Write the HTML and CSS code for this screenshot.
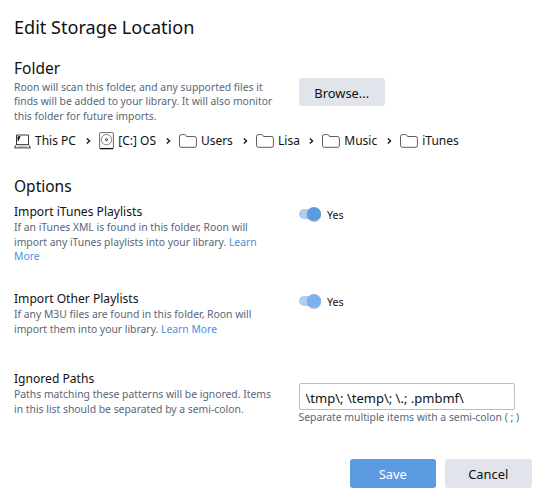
FILE: index.html
```html
<!DOCTYPE html>
<html lang="en">
<head>
<meta charset="UTF-8">
<meta name="viewport" content="width=device-width, initial-scale=1.0">
<title>Edit Storage Location</title>
<link rel="stylesheet" href="styles.css">
</head>
<body>
<div class="dialog">
    <h1>Edit Storage Location</h1>
    <div class="row folder">
        <div class="info">
            <h2>Folder</h2>
            <p>Roon will scan this folder, and any supported files it<br>finds will be added to your library. It will also monitor<br>this folder for future imports.</p>
        </div>
        <button class="btn browse">Browse...</button>
    </div>
    <svg width="0" height="0" class="defs">
        <symbol id="folder" viewBox="0 0 18 14">
            <path d="M.5 11.5V2.5Q.5 .6 2.4 .6H5.6Q6.6 .6 7.2 1.8L7.6 2.5H15.6Q17.4 2.5 17.4 4.3V11.5Q17.4 13.3 15.6 13.3H2.4Q.5 13.3 .5 11.5Z" fill="none" stroke="#333" stroke-width=".8"/>
        </symbol>
        <symbol id="chevron" viewBox="0 0 5 6">
            <path d="M.8 .5L3.6 3L.8 5.5" fill="none" stroke="#111" stroke-width="1.3"/>
        </symbol>
    </svg>
    <div class="path">
        <span class="crumb pc">
            <svg width="17" height="15" viewBox="0 0 17 15"><path d="M2.5 10.5V1H14.5V10.5" fill="none" stroke="#222" stroke-width=".9"/><path d="M2.3 10.6H14.7L16.4 13.9H.6Z" fill="none" stroke="#222" stroke-width=".9"/><path d="M4 12.3H13" stroke="#777" stroke-width=".6"/><path d="M3.6 2.2H6.6L5.4 5.2H4.8V7H3.6Z" fill="#111"/></svg>
            <span>This PC</span>
        </span>
        <svg class="chevron"><use href="#chevron"/></svg>
        <span class="crumb disk">
            <svg width="15" height="18" viewBox="0 0 15 18"><rect x=".6" y=".6" width="13.8" height="16.3" rx="1" fill="none" stroke="#444" stroke-width=".8"/><circle cx="7.5" cy="7.7" r="5.2" fill="none" stroke="#555" stroke-width=".7"/><circle cx="7.5" cy="7.7" r="1" fill="none" stroke="#111" stroke-width=".9"/><path d="M1 16.5H14" stroke="#111" stroke-width="1.1"/></svg>
            <span>[C:] OS</span>
        </span>
        <svg class="chevron"><use href="#chevron"/></svg>
        <span class="crumb users"><svg width="18" height="14"><use href="#folder"/></svg><span>Users</span></span>
        <svg class="chevron"><use href="#chevron"/></svg>
        <span class="crumb lisa"><svg width="18" height="14"><use href="#folder"/></svg><span>Lisa</span></span>
        <svg class="chevron"><use href="#chevron"/></svg>
        <span class="crumb music"><svg width="18" height="14"><use href="#folder"/></svg><span>Music</span></span>
        <svg class="chevron"><use href="#chevron"/></svg>
        <span class="crumb itunes"><svg width="18" height="14"><use href="#folder"/></svg><span>iTunes</span></span>
    </div>
    <h2>Options</h2>
    <div class="row itunes-option">
        <div class="info">
            <h3>Import iTunes Playlists</h3>
            <p>If an iTunes XML is found in this folder, Roon will<br>import any iTunes playlists into your library. <a href="#">Learn<br>More</a></p>
        </div>
        <label class="switch"><span class="track"><span class="knob"></span></span><span class="state">Yes</span></label>
    </div>
    <div class="row other-option">
        <div class="info">
            <h3>Import Other Playlists</h3>
            <p>If any M3U files are found in this folder, Roon will<br>import them into your library. <a href="#">Learn More</a></p>
        </div>
        <label class="switch"><span class="track"><span class="knob light"></span></span><span class="state">Yes</span></label>
    </div>
    <div class="row ignored">
        <div class="info">
            <h3>Ignored Paths</h3>
            <p>Paths matching these patterns will be ignored. Items<br>in this list should be separated by a semi-colon.</p>
        </div>
        <div class="field">
            <input type="text" value="\tmp\; \temp\; \.; .pmbmf\">
            <p>Separate multiple items with a semi-colon ( ; )</p>
        </div>
    </div>
    <div class="footer">
        <button class="btn save">Save</button>
        <button class="btn">Cancel</button>
    </div>
</div>
</body>
</html>
```
FILE: styles.css
```css
body {
    margin: 0;
    background: #fff;
    color: #111;
    font-family: "Noto Sans", sans-serif;
}
.dialog {
    width: 544px;
    height: 500px;
    box-sizing: border-box;
    padding: 15px 12.5px 0 14px;
    overflow: hidden;
}
h1, h2, h3, p {
    margin: 0;
    font-weight: 400;
    white-space: nowrap;
}
h1 {
    font-size: 18.1px;
    line-height: 24px;
    height: 42px;
}
h2 {
    font-size: 15.5px;
    line-height: 22px;
}
h3 {
    font-size: 12.1px;
    line-height: 17px;
}
p {
    font-size: 10.36px;
    line-height: 14.5px;
    color: #586678;
}
a {
    color: #4a90e2;
    text-decoration: none;
}
.row {
    display: flex;
}
.info {
    width: 284.5px;
    flex: none;
}
.folder {
    height: 75px;
}
.folder p {
    padding-top: 0.6px;
}
.btn {
    width: 86.5px;
    height: 29px;
    padding: 0;
    border: none;
    border-radius: 3px;
    background: #e1e4eb;
    color: #111;
    font: 12.9px "Noto Sans", sans-serif;
}
.browse {
    margin-top: 21px;
    height: 28px;
    padding-top: 1px;
}
.defs {
    display: none;
}
.path {
    display: flex;
    align-items: center;
    height: 18px;
    margin-bottom: 25px;
    font-size: 12px;
    line-height: 18px;
    white-space: nowrap;
}
.crumb {
    display: flex;
    align-items: center;
    gap: 4px;
    flex: none;
}
.chevron {
    width: 5px;
    height: 6px;
    flex: none;
    margin-right: 8.2px;
}
.pc {
    width: 72px;
}
.disk {
    width: 66.5px;
}
.users {
    width: 64px;
}
.lisa {
    width: 53px;
}
.music {
    width: 64.8px;
}
.itunes-option {
    height: 87px;
    margin-top: 6px;
}
.other-option {
    height: 80px;
}
.switch {
    display: flex;
    align-items: center;
    height: 16px;
    margin-top: 3px;
    margin-left: 0.5px;
    font-size: 10.7px;
    gap: 6px;
}
.state {
    padding-top: 2px;
}
.track {
    display: flex;
    align-items: center;
    justify-content: flex-end;
    width: 22px;
    height: 10px;
    border-radius: 5px;
    background: #aecdf0;
}
.knob {
    width: 14px;
    height: 14px;
    flex: none;
    border-radius: 50%;
    background: #5a9ae0;
    box-shadow: 0 1px 1px rgba(0, 0, 0, 0.25);
}
.light {
    background: #7eb1ec;
}
.ignored {
    height: 89px;
}
.field input {
    display: block;
    box-sizing: border-box;
    width: 216px;
    height: 27px;
    margin: 13px 0 0;
    padding: 3px 6px 0;
    border: 1px solid #b9bec5;
    border-radius: 2px;
    color: #111;
    font: 13px "Noto Sans", sans-serif;
}
.footer {
    display: flex;
    justify-content: flex-end;
    gap: 9px;
}
.save {
    background: #5c9ae1;
    color: #fff;
}
```
